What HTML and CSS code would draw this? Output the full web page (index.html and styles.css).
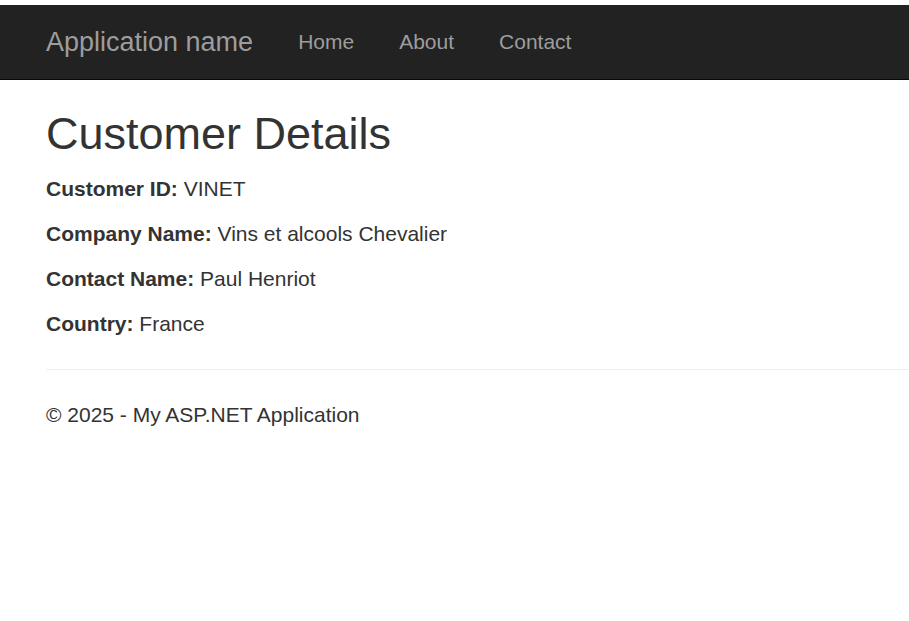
FILE: index.html
```html
<!DOCTYPE html>
<html lang="en">
<head>
<meta charset="utf-8">
<title>Customer Details - My ASP.NET Application</title>
<link rel="stylesheet" href="styles.css">
</head>
<body>
<div class="navbar">
  <a class="brand" href="#">Application name</a>
  <ul class="nav">
    <li><a href="#">Home</a></li>
    <li><a href="#">About</a></li>
    <li><a href="#">Contact</a></li>
  </ul>
</div>
<div class="body-content">
  <h2 class="title">Customer Details</h2>
  <p><strong>Customer ID:</strong> VINET</p>
  <p><strong>Company Name:</strong> Vins et alcools Chevalier</p>
  <p><strong>Contact Name:</strong> Paul Henriot</p>
  <p><strong>Country:</strong> France</p>
  <hr class="rule">
  <footer class="footer">
    <p>&copy; 2025 - My ASP.NET Application</p>
  </footer>
</div>
</body>
</html>
```

FILE: styles.css
```css
html, body {
  margin: 0;
  padding: 0;
  background: #fff;
}
body {
  padding-top: 5px;
  font-family: "Liberation Sans", Arial, Helvetica, sans-serif;
  font-size: 21px;
  line-height: 30px;
  color: #333;
}
.navbar {
  display: flex;
  align-items: center;
  height: 74px;
  background: #222;
  border-bottom: 1px solid #080808;
  padding-left: 46px;
}
.brand {
  font-size: 27px;
  line-height: 30px;
  color: #9d9d9d;
  text-decoration: none;
  margin-right: 45px;
  margin-top: -1px;
}
.nav {
  display: flex;
  gap: 45px;
  list-style: none;
  margin: 0;
  padding: 0;
}
.nav a {
  color: #9d9d9d;
  text-decoration: none;
  font-size: 21px;
  line-height: 30px;
}
.body-content {
  padding-left: 46px;
}
.title {
  font-size: 45px;
  font-weight: 500;
  line-height: 49.5px;
  margin: 29px 0 15px;
}
.body-content p {
  margin: 0 0 15px;
}
.body-content strong {
  font-weight: bold;
}
.rule {
  margin: 30px 0;
  border: 0;
  border-top: 1px solid #eee;
  height: 0;
}
.footer p {
  margin: 0 0 15px;
}
```
